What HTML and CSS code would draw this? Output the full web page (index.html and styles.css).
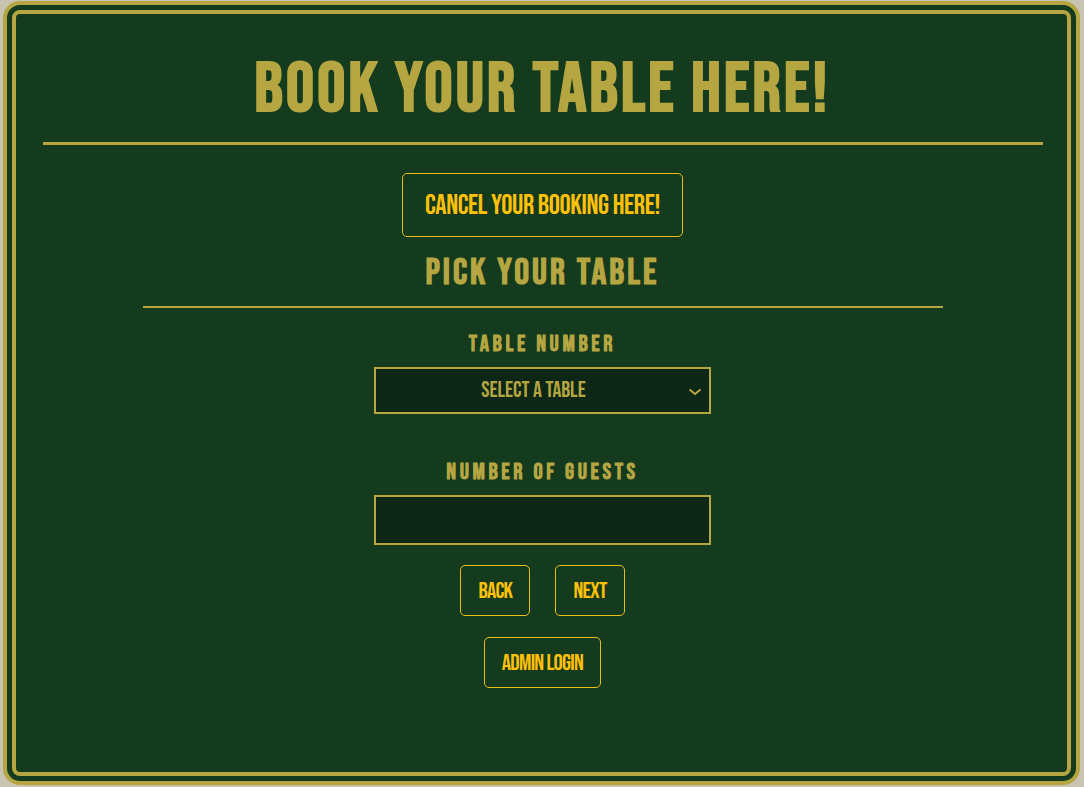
FILE: index.html
```html
<!DOCTYPE html>
<html lang="en">
<head>
<meta charset="utf-8">
<title>Book your table</title>
<link rel="stylesheet" href="styles.css">
</head>
<body>
<main class="card">
  <h1 class="title">Book your table here!</h1>
  <hr class="rule rule-main">
  <a class="btn btn-cancel" href="#">Cancel your booking here!</a>
  <h2 class="subtitle">Pick your table</h2>
  <hr class="rule rule-sub">
  <form class="form">
    <label class="label" for="table">Table number</label>
    <div class="select-wrap">
      <select id="table" class="field select">
        <option>Select a table</option>
      </select>
      <svg class="chevron" width="14" height="8" viewBox="0 0 14 8" aria-hidden="true"><path d="M1.5 1.5 L7 6 L12.5 1.5" fill="none" stroke="#b5a642" stroke-width="2"/></svg>
    </div>
    <label class="label label-guests" for="guests">Number of guests</label>
    <input id="guests" class="field input" type="text">
    <div class="nav">
      <button type="button" class="btn btn-small">Back</button>
      <button type="button" class="btn btn-small">Next</button>
    </div>
    <button type="button" class="btn btn-small btn-admin">Admin login</button>
  </form>
</main>
</body>
</html>
```
FILE: styles.css
```css
html, body {
  margin: 0;
  height: 100%;
}
body {
  background: #c9c4b1;
  padding: 1px 4px 2px 3px;
  box-sizing: border-box;
  font-family: "Bebas Neue", "Oswald", "Liberation Sans Narrow", sans-serif;
}
.card {
  box-sizing: border-box;
  height: 100%;
  border: 13px double #b5a642;
  border-radius: 17px;
  background: #153b1f;
  padding-top: 41px;
  padding-left: 2px;
  display: flex;
  flex-direction: column;
  align-items: center;
  text-transform: uppercase;
}
.title {
  margin: 0;
  font-size: 70px;
  line-height: 1;
  font-weight: bold;
  color: #b5a642;
  letter-spacing: 3.2px;
}
.rule {
  border: 0;
  background: #b5a642;
  margin: 0;
}
.rule-main {
  width: 1000px;
  height: 3px;
  margin-top: 17px;
}
.btn {
  box-sizing: border-box;
  display: inline-flex;
  align-items: center;
  justify-content: center;
  background: transparent;
  border: 1px solid #e8bf1a;
  border-radius: 5px;
  color: #ffc107;
  font-family: inherit;
  text-transform: uppercase;
  text-decoration: none;
  cursor: pointer;
}
.btn-cancel {
  margin-top: 28px;
  height: 64px;
  padding: 0 22px;
  font-size: 28px;
  letter-spacing: -0.4px;
}
.subtitle {
  margin: 18px 0 0;
  font-size: 37px;
  line-height: 1;
  font-weight: bold;
  color: #b5a642;
  letter-spacing: 3px;
}
.rule-sub {
  width: 800px;
  height: 2px;
  margin-top: 14px;
}
.form {
  display: flex;
  flex-direction: column;
  align-items: center;
  margin-top: 25px;
}
.label {
  font-size: 23px;
  line-height: 1;
  font-weight: bold;
  color: #b5a642;
  letter-spacing: 3.6px;
}
.label-guests {
  margin-top: 47px;
}
.select-wrap {
  position: relative;
  margin-top: 11px;
}
.field {
  box-sizing: border-box;
  width: 337px;
  border: 2px solid #b5a642;
  background: #0c2716;
  color: #b5a642;
  font-family: inherit;
  outline: none;
}
.select {
  display: block;
  height: 47px;
  appearance: none;
  -webkit-appearance: none;
  border-radius: 0;
  font-size: 22px;
  text-transform: uppercase;
  text-align: center;
  text-align-last: center;
  padding: 0 18px 0 0;
}
.chevron {
  position: absolute;
  right: 9px;
  top: 21px;
  pointer-events: none;
}
.input {
  display: block;
  height: 50px;
  margin-top: 11px;
  border-radius: 0;
  font-size: 23px;
}
.nav {
  display: flex;
  gap: 25px;
  margin-top: 20px;
}
.btn-small {
  height: 51px;
  padding: 0 17px;
  font-size: 23px;
  letter-spacing: -0.7px;
}
.btn-admin {
  margin-top: 21px;
}
```
